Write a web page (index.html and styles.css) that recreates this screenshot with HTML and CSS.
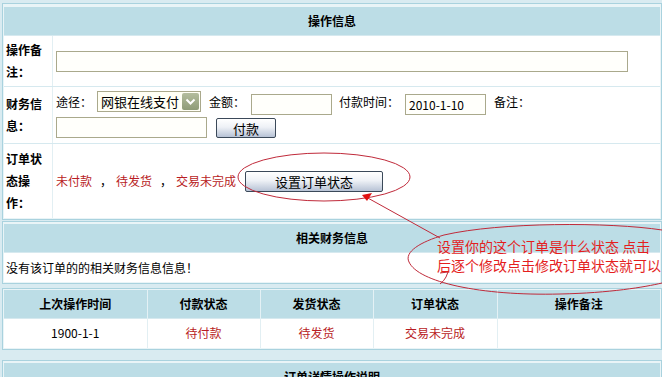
FILE: index.html
```html
<!DOCTYPE html>
<html lang="zh-CN">
<head>
    <meta charset="UTF-8">
    <meta name="viewport" content="width=device-width, initial-scale=1.0">
    <title>订单操作</title>
    <link rel="stylesheet" href="styles.css">
</head>
<body>
<div class="page">
    <!-- 操作信息 -->
    <section class="panel">
        <h2 class="panel-head">操作信息</h2>
        <div class="form-row row-remark">
            <div class="label">操作备注：</div>
            <div class="field"><input class="txt txt-long" type="text"></div>
        </div>
        <div class="form-row row-finance">
            <div class="label">财务信息：</div>
            <div class="field">
                <div class="line">
                    <span class="gap5">途径：</span>
                    <div class="select gap8">
                        <span class="select-text">网银在线支付</span>
                        <i class="select-btn">
                            <svg width="17" height="17" viewBox="0 0 17 17"><path d="M4.5 6.5 L8.5 10.5 L12.5 6.5" fill="none" stroke="#fff" stroke-width="2"/></svg>
                        </i>
                    </div>
                    <span class="gap6">金额：</span>
                    <input class="txt txt-short gap7" type="text">
                    <span class="gap6">付款时间：</span>
                    <input class="txt txt-short gap8" type="text" value="2010-1-10">
                    <span>备注：</span>
                </div>
                <div class="line">
                    <input class="txt txt-mid gap9" type="text">
                    <button class="btn btn-pay">付款</button>
                </div>
            </div>
        </div>
        <div class="form-row row-state">
            <div class="label">订单状态操作：</div>
            <div class="field state-line">
                <span class="red">未付款</span><span class="sep">，</span><span class="red">待发货</span><span class="sep">，</span><span class="red gap8">交易未完成</span>
                <button class="btn btn-state">设置订单状态</button>
            </div>
        </div>
    </section>

    <!-- 相关财务信息 -->
    <section class="panel panel-finance">
        <h2 class="panel-head">相关财务信息</h2>
        <div class="empty-row">没有该订单的的相关财务信息信息！</div>
    </section>

    <!-- 操作记录 -->
    <section class="panel panel-log">
        <table class="log">
            <colgroup>
                <col style="width:143px"><col style="width:113px"><col style="width:113px"><col style="width:124px"><col>
            </colgroup>
            <tr>
                <th>上次操作时间</th><th>付款状态</th><th>发货状态</th><th>订单状态</th><th>操作备注</th>
            </tr>
            <tr>
                <td>1900-1-1</td><td class="red">待付款</td><td class="red">待发货</td><td class="red">交易未完成</td><td></td>
            </tr>
        </table>
    </section>

    <section class="panel panel-help">
        <h2 class="panel-head">订单详情操作说明</h2>
    </section>

    <!-- 标注 -->
    <svg class="note" width="662" height="377" viewBox="0 0 662 377">
        <ellipse cx="324" cy="177" rx="86" ry="24" fill="none" stroke="#c02a3a" stroke-width="1"/>
        <path d="M440 238 L366 197" fill="none" stroke="#c02a3a" stroke-width="1"/>
        <path d="M362 195 L372 193 L367 201 Z" fill="#e01010"/>
        <path d="M444 235 C500 222 610 222 662 230" fill="none" stroke="#c02a3a" stroke-width="1"/>
        <path d="M444 235 C420 242 404 252 409 262 C418 282 480 296 560 294 C610 293 645 287 662 283" fill="none" stroke="#c02a3a" stroke-width="1"/>
        <path d="M440 273 L448 272 L446 277 Q444 281 440 284" fill="none" stroke="#c02a3a" stroke-width="1"/>
        <text class="note-text" x="437" y="252">设置你的这个订单是什么状态 点击</text>
        <text class="note-text" x="437" y="271">后逐个修改点击修改订单状态就可以</text>
    </svg>
</div>
</body>
</html>
```

FILE: styles.css
```css
html, body {
    margin: 0;
    padding: 0;
}

body {
    background: #d9ebf1;
    font: 12px/1.4 "Noto Sans CJK SC", "Liberation Sans", sans-serif;
    color: #000;
}

.page {
    position: relative;
    width: 662px;
    height: 377px;
    overflow: hidden;
}

.panel {
    margin: 3px 0 0 2px;
    border: 1px solid #a9d2de;
    padding: 3px 1px 1px 1px;
    background: #e9f4f7;
}

.panel-head {
    margin: 0;
    height: 28px;
    line-height: 28px;
    background: #bcdde6;
    text-align: center;
    font-size: 12px;
    font-weight: bold;
}

.form-row {
    display: grid;
    grid-template-columns: 49px 1fr;
    background: #fff;
    border-top: 1px solid #d6e9ef;
}

.row-remark {
    height: 50px;
}

.row-finance {
    height: 56px;
}

.row-state {
    height: 74px;
}

.label {
    display: flex;
    align-items: center;
    padding: 0 10px 0 2px;
    border-right: 1px solid #e2eff3;
    font-weight: bold;
    line-height: 22px;
}

.field {
    display: flex;
    flex-direction: column;
    justify-content: center;
    gap: 1px;
    padding-left: 3px;
}

.line {
    display: flex;
    align-items: center;
    height: 24px;
}

.state-line {
    flex-direction: row;
    justify-content: flex-start;
    align-items: center;
}

.txt {
    box-sizing: border-box;
    height: 21px;
    margin: 0;
    padding: 0 3px;
    border: 1px solid #aaa98c;
    background: #fffffb;
    font: 12px "Noto Sans CJK SC", sans-serif;
    color: #000;
}

.txt-long {
    width: 572px;
}

.txt-short {
    width: 81px;
    margin-top: 3px;
}

.txt-mid {
    width: 151px;
}

.select {
    box-sizing: border-box;
    display: flex;
    align-items: center;
    justify-content: space-between;
    width: 104px;
    height: 21px;
    margin-top: -3px;
    padding: 0 1px 0 3px;
    border: 1px solid #aaa98c;
    background: #fffff5;
}

.select-text {
    font-size: 13px;
    line-height: 19px;
}

.select-btn {
    display: block;
    width: 17px;
    height: 17px;
    background: linear-gradient(#b4bd9e, #8f9c78);
    border-radius: 2px;
}

.select-btn svg {
    display: block;
}

.btn {
    box-sizing: border-box;
    height: 21px;
    margin: 0;
    padding: 0;
    border: 1px solid #3b4959;
    border-radius: 2px;
    background: linear-gradient(#ffffff, #eef1f6 45%, #b7c2d5);
    font: 13px/19px "Noto Sans CJK SC", sans-serif;
    color: #000;
}

.btn-pay {
    width: 60px;
    height: 20px;
}

.btn-state {
    width: 138px;
}

/* spacing helpers, after .txt / .btn so they win */
.gap5 { margin-right: 5px; }
.gap6 { margin-right: 6px; }
.gap7 { margin-right: 7px; }
.gap8 { margin-right: 8px; }
.gap9 { margin-right: 9px; }

.red {
    color: #b81c24;
}

.sep {
    margin: 0 3px 0 7px;
}

.empty-row {
    height: 29px;
    line-height: 29px;
    padding-left: 2px;
    background: #fff;
    border-top: 1px solid #d6e9ef;
}

.panel-finance {
    margin-top: 1px;
    padding-top: 2px;
}

.panel-log {
    margin-top: 4px;
    padding: 1px;
}

.log {
    width: 100%;
    border-collapse: collapse;
    table-layout: fixed;
}

.log th {
    height: 28px;
    padding: 0;
    background: #bcdde6;
    border-left: 1px solid #e4f1f5;
    font-weight: bold;
}

.log td {
    height: 29px;
    padding: 0;
    background: #fff;
    border-left: 1px solid #e2eff3;
    border-top: 1px solid #d6e9ef;
    text-align: center;
}

.log th:first-child,
.log td:first-child {
    border-left: 0;
}

.panel-help {
    margin-top: 10px;
    padding-top: 2px;
}

.note {
    position: absolute;
    left: 0;
    top: 0;
    pointer-events: none;
}

.note-text {
    font: 14px "Noto Sans CJK SC", sans-serif;
    fill: #e41e1e;
}
```
